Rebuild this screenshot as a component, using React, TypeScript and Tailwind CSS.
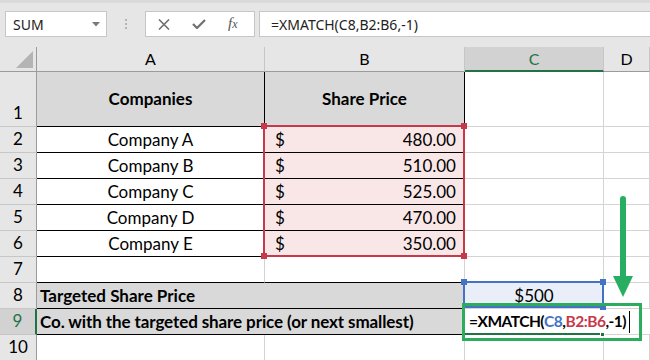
import { ReactNode } from 'react'

const gridLine = 'border-r border-b border-[#d4d4d4]'

function Cell({ className = '', children }: { className?: string; children?: ReactNode }) {
  return <div className={`flex items-center min-w-0 ${className}`}>{children}</div>
}

function ColHead({ label, active = false }: { label: string; active?: boolean }) {
  return active ? (
    <div className="flex items-center justify-center bg-[#d2d2d2] border-r border-[#c6c6c6] border-b-2 border-b-[#217346] text-[#217346] text-[16px]">
      {label}
    </div>
  ) : (
    <div className="flex items-center justify-center bg-[#e6e6e6] border-r border-[#c6c6c6] border-b border-b-[#9b9b9b] text-[16px] text-black">
      {label}
    </div>
  )
}

function RowHead({ n, active = false }: { n: number; active?: boolean }) {
  return active ? (
    <div className="flex items-end justify-center pb-[1px] bg-[#d2d2d2] border-b border-[#c6c6c6] border-r-2 border-r-[#217346] text-[#217346] text-[17px]">
      {n}
    </div>
  ) : (
    <div className="flex items-end justify-center pb-[1px] bg-[#e6e6e6] border-b border-[#c6c6c6] border-r border-r-[#9b9b9b] text-[17px] text-black">
      {n}
    </div>
  )
}

const companies = [
  { name: 'Company A', price: '480.00' },
  { name: 'Company B', price: '510.00' },
  { name: 'Company C', price: '525.00' },
  { name: 'Company D', price: '470.00' },
  { name: 'Company E', price: '350.00' },
]

function Handle({ className }: { className: string }) {
  return <div className={`absolute w-[6px] h-[6px] ${className}`} />
}

export default function App() {
  return (
    <div className="w-[650px] h-[360px] overflow-hidden bg-white font-['Lato',sans-serif] text-black">
      {/* formula bar */}
      <div className="h-[47px] bg-[#e6e6e6] border-t-[3px] border-t-[#dadada] flex items-start pt-[8px] pl-[5px] gap-[4px]">
        <div className="w-[102px] h-[26px] bg-white border border-[#c6c6c6] flex items-center justify-between pl-[7px] pr-[6px] font-['Noto_Sans',sans-serif] text-[14px] text-[#222]">
          <span>SUM</span>
          <svg width="8" height="5" viewBox="0 0 8 5"><path d="M0 0h8L4 4.5z" fill="#7a7a7a" /></svg>
        </div>
        <div className="w-[30px] h-[26px] flex flex-col items-center justify-center gap-[2px]">
          <span className="w-[2px] h-[2px] bg-[#b3b3b3]" />
          <span className="w-[2px] h-[2px] bg-[#b3b3b3]" />
          <span className="w-[2px] h-[2px] bg-[#b3b3b3]" />
        </div>
        <div className="w-[110px] h-[26px] bg-white border border-[#c6c6c6] flex items-center pl-[12px] gap-[22px]">
          <svg width="12" height="11" viewBox="0 0 12 11">
            <path d="M1 0.5l10 10M11 0.5l-10 10" stroke="#707070" strokeWidth="1.6" fill="none" />
          </svg>
          <svg width="14" height="10" viewBox="0 0 14 10">
            <path d="M1 5l4 4L13 1" stroke="#707070" strokeWidth="2.2" fill="none" />
          </svg>
          <span className="font-['Liberation_Serif',serif] italic text-[15px] text-[#555] leading-none pb-[2px]">
            f<span className="text-[12px]">x</span>
          </span>
        </div>
        <div className="flex-1 h-[26px] bg-white border border-r-0 border-[#c6c6c6] flex items-center pl-[11px] font-['Noto_Sans',sans-serif] text-[14px] text-[#222]">
          =XMATCH(C8,B2:B6,-1)
        </div>
      </div>

      {/* sheet */}
      <div className="relative grid grid-cols-[37px_228px_200px_139px_1fr] grid-rows-[25px_55px_repeat(9,26px)] text-[17px]">
        <div className="bg-[#e6e6e6] border-r border-r-[#9b9b9b] border-b border-b-[#9b9b9b] flex items-end justify-end pr-[3px] pb-[3px]">
          <svg width="17" height="17" viewBox="0 0 17 17"><path d="M17 0v17H0z" fill="#b4b4b4" /></svg>
        </div>
        <ColHead label="A" />
        <ColHead label="B" />
        <ColHead label="C" active />
        <ColHead label="D" />

        {/* row 1 */}
        <RowHead n={1} />
        <Cell className="justify-center bg-[#d9d9d9] border-r border-b border-black font-bold">Companies</Cell>
        <Cell className="justify-center bg-[#d9d9d9] border-r border-b border-black font-bold">Share Price</Cell>
        <Cell className={gridLine} />
        <Cell className={gridLine} />

        {companies.map((c, i) => (
          <>
            <RowHead key={`h${i}`} n={i + 2} />
            <Cell key={`a${i}`} className="justify-center bg-white border-r border-b border-black">{c.name}</Cell>
            <Cell key={`b${i}`} className="justify-between bg-[#f9e7e8] border-r border-b border-black pl-[10px] pr-[8px]">
              <span>$</span>
              <span>{c.price}</span>
            </Cell>
            <Cell key={`c${i}`} className={gridLine} />
            <Cell key={`d${i}`} className={gridLine} />
          </>
        ))}

        {/* row 7 */}
        <RowHead n={7} />
        <Cell className="border-r border-r-[#d4d4d4] border-b border-b-black" />
        <Cell className="border-r border-r-[#d4d4d4] border-b border-b-black" />
        <Cell className={gridLine} />
        <Cell className={gridLine} />

        {/* row 8 */}
        <RowHead n={8} />
        <Cell className="col-span-2 bg-[#d9d9d9] border-r border-b border-black font-bold pl-[3px]">Targeted Share Price</Cell>
        <Cell className="justify-center bg-[#e9eef8] border-r border-b border-[#d4d4d4]">$500</Cell>
        <Cell className={gridLine} />

        {/* row 9 */}
        <RowHead n={9} active />
        <Cell className="col-span-2 bg-[#d9d9d9] border-r border-b border-black font-bold pl-[3px] whitespace-nowrap tracking-[-0.1px]">
          Co. with the targeted share price (or next smallest)
        </Cell>
        <Cell className="col-span-2 bg-white border-b border-[#d4d4d4] font-bold whitespace-nowrap pl-[4px] text-[15.5px] tracking-[-0.5px]">
          <span>=XMATCH(</span>
          <span className="text-[#4472c4]">C8</span>
          <span>,</span>
          <span className="text-[#c5394a]">B2:B6</span>
          <span>,-1)</span>
          <span className="w-[1px] h-[22px] bg-black ml-[3px]" />
        </Cell>

        {/* row 10 */}
        <RowHead n={10} />
        <Cell className={gridLine} />
        <Cell className={gridLine} />
        <Cell className={gridLine} />
        <Cell className={gridLine} />

        {/* range highlight B2:B6 */}
        <div className="absolute left-[263px] top-[78px] w-[202px] h-[132px] border-2 border-[#c5394a] pointer-events-none">
          <Handle className="-left-[4px] -top-[4px] bg-[#c5394a]" />
          <Handle className="-right-[4px] -top-[4px] bg-[#c5394a]" />
          <Handle className="-left-[4px] -bottom-[4px] bg-[#c5394a]" />
          <Handle className="-right-[4px] -bottom-[4px] bg-[#c5394a]" />
        </div>

        {/* range highlight C8 */}
        <div className="absolute left-[463px] top-[234px] w-[141px] h-[27px] border-2 border-[#4472c4] pointer-events-none">
          <Handle className="-left-[4px] -top-[4px] bg-[#4472c4]" />
          <Handle className="-right-[4px] -top-[4px] bg-[#4472c4]" />
          <Handle className="-right-[4px] -bottom-[4px] bg-[#4472c4]" />
        </div>

        {/* active cell bottom edge */}
        <div className="absolute left-[464px] top-[286px] w-[139px] h-[2px] bg-[#217346]" />
        <div className="absolute left-[600px] top-[285px] w-[5px] h-[5px] bg-[#217346] border border-white" />

        {/* annotation box */}
        <div className="absolute left-[462px] top-[256px] w-[180px] h-[38px] border-[3px] border-[#2eac5e]" />

        {/* annotation arrow */}
        <svg className="absolute left-[610px] top-[148px]" width="26" height="106" viewBox="0 0 26 106">
          <path d="M13 4v80" stroke="#27ae60" strokeWidth="6" strokeLinecap="round" />
          <path d="M3 81h20l-10 21z" fill="#27ae60" />
        </svg>
      </div>
    </div>
  )
}
